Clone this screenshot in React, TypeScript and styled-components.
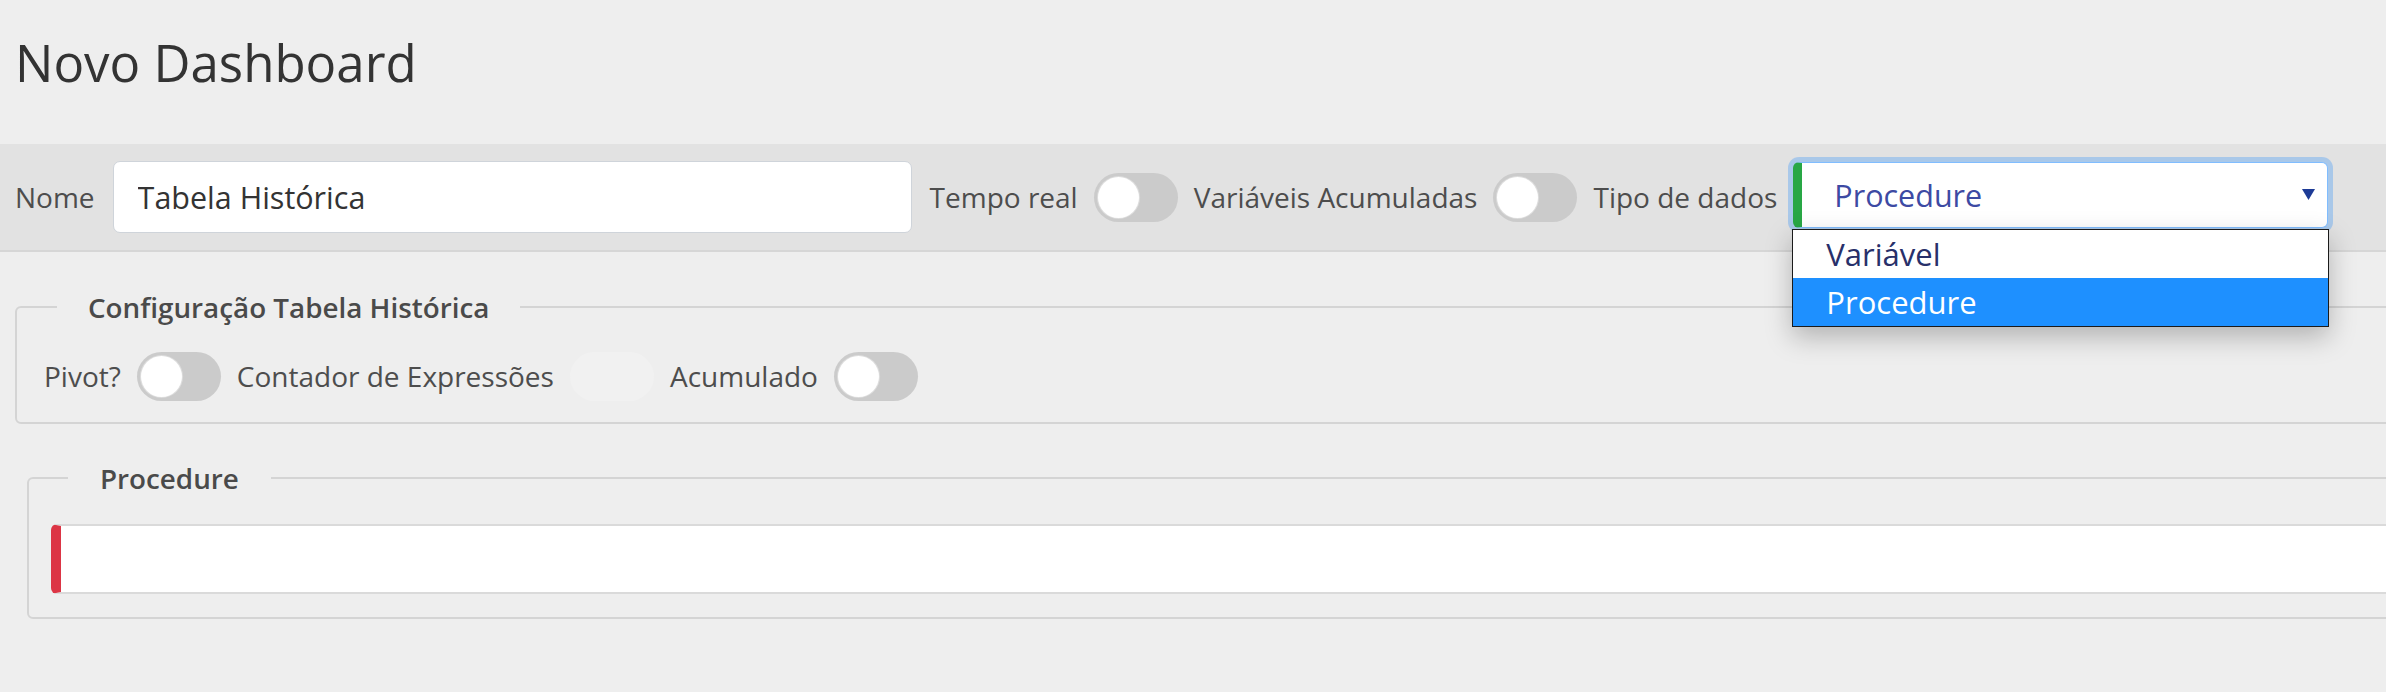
import styled, { createGlobalStyle } from "styled-components";

const GlobalStyle = createGlobalStyle`
  html, body {
    margin: 0;
    padding: 0;
    background: #eeeeee;
    overflow: hidden;
  }
  body {
    font-family: "Open Sans", "Liberation Sans", sans-serif;
    color: #333;
  }
  * {
    box-sizing: border-box;
  }
`;

const Page = styled.div`
  width: 2480px;
  min-height: 692px;
`;

const Header = styled.div`
  height: 144px;
  padding: 37px 0 0 15px;
`;

const Title = styled.h1`
  margin: 0;
  font-size: 51px;
  line-height: 51px;
  font-weight: 400;
  color: #333;
`;

const Toolbar = styled.div`
  height: 108px;
  display: flex;
  align-items: center;
  gap: 16px;
  padding: 0 15px;
  background: #e2e2e2;
  border-bottom: 2px solid #d6d6d6;
`;

const Label = styled.span`
  font-size: 28px;
  color: #4d4d4d;
  white-space: nowrap;
`;

const TextInput = styled.input`
  width: 799px;
  height: 72px;
  flex: none;
  margin: 0 2px;
  border: 1px solid #cfd4da;
  border-radius: 7px;
  padding: 0 24px;
  font: inherit;
  font-size: 30.5px;
  color: #333;
  background: #fff;
  outline: none;
`;

const Switch = styled.span<{ $blank?: boolean }>`
  position: relative;
  display: inline-block;
  flex: none;
  width: 84px;
  height: 49px;
  border-radius: 25px;
  background: ${(p) => (p.$blank ? "#f1f1f1" : "#cbcbcb")};
  &::after {
    content: "";
    display: ${(p) => (p.$blank ? "none" : "block")};
    position: absolute;
    left: 4px;
    top: 4px;
    width: 41px;
    height: 41px;
    border-radius: 50%;
    background: #fff;
    box-shadow: 0 0 0 1px #dddddd;
  }
`;

const SelectWrap = styled.div`
  position: relative;
  flex: none;
  width: 535px;
  height: 66px;
  margin-bottom: 5px;
`;

const SelectBox = styled.div`
  height: 100%;
  display: flex;
  align-items: center;
  justify-content: space-between;
  padding: 0 12px 0 32px;
  background: #fff;
  border: 1px solid #80bdff;
  border-left: 9px solid #28a745;
  border-radius: 6px;
  box-shadow: 0 0 0 5px rgba(0, 123, 255, 0.25);
  font-size: 30.5px;
  color: #3d4aa3;
`;

const OptionList = styled.div`
  position: absolute;
  top: calc(100% + 1px);
  left: -1px;
  width: 537px;
  background: #fff;
  border: 1px solid #1b1b1b;
  box-shadow: 0 10px 25px rgba(0, 0, 0, 0.25);
  z-index: 5;
`;

const Option = styled.div<{ $active?: boolean }>`
  height: 48px;
  display: flex;
  align-items: center;
  padding-left: 33px;
  font-size: 31px;
  color: ${(p) => (p.$active ? "#fff" : "#28306a")};
  background: ${(p) => (p.$active ? "#1e90ff" : "#fff")};
`;

const Group = styled.fieldset<{ $left: number; $top: number; $pad: string }>`
  margin: ${(p) => p.$top}px 0 0 ${(p) => p.$left}px;
  padding: ${(p) => p.$pad};
  border: 2px solid #d4d4d4;
  border-radius: 6px;
  min-width: 0;
`;

const Legend = styled.legend<{ $offset: number; $padX: number }>`
  margin-left: ${(p) => p.$offset}px;
  padding: 0 ${(p) => p.$padX}px;
  font-size: 27.8px;
  line-height: 38px;
  font-weight: 600;
  color: #4a4a4a;
`;

const Row = styled.div`
  display: flex;
  align-items: center;
  gap: 16px;
  height: 48px;
`;

const ProcInput = styled.div`
  height: 70px;
  background: #fff;
  border: 2px solid #dadada;
  border-left: 10px solid #dc3545;
  border-radius: 6px;
`;

const Caret = () => (
  <svg width="13" height="11" viewBox="0 0 13 11">
    <path d="M0 0 H13 L6.5 11 Z" fill="#1d3b96" />
  </svg>
);

export default function App() {
  return (
    <Page>
      <GlobalStyle />
      <Header>
        <Title>Novo Dashboard</Title>
      </Header>
      <Toolbar>
        <Label>Nome</Label>
        <TextInput defaultValue="Tabela Histórica" />
        <Label>Tempo real</Label>
        <Switch />
        <Label>Variáveis Acumuladas</Label>
        <Switch />
        <Label>Tipo de dados</Label>
        <SelectWrap>
          <SelectBox>
            <span>Procedure</span>
            <Caret />
          </SelectBox>
          <OptionList>
            <Option>Variável</Option>
            <Option $active>Procedure</Option>
          </OptionList>
        </SelectWrap>
      </Toolbar>
      <Group $left={15} $top={36} $pad="26px 27px 22px">
        <Legend $offset={13} $padX={31}>
          Configuração Tabela Histórica
        </Legend>
        <Row>
          <Label>Pivot?</Label>
          <Switch />
          <Label>Contador de Expressões</Label>
          <Switch $blank />
          <Label>Acumulado</Label>
          <Switch />
        </Row>
      </Group>
      <Group $left={27} $top={35} $pad="27px 0 23px 22px">
        <Legend $offset={17} $padX={32}>
          Procedure
        </Legend>
        <ProcInput />
      </Group>
    </Page>
  );
}
